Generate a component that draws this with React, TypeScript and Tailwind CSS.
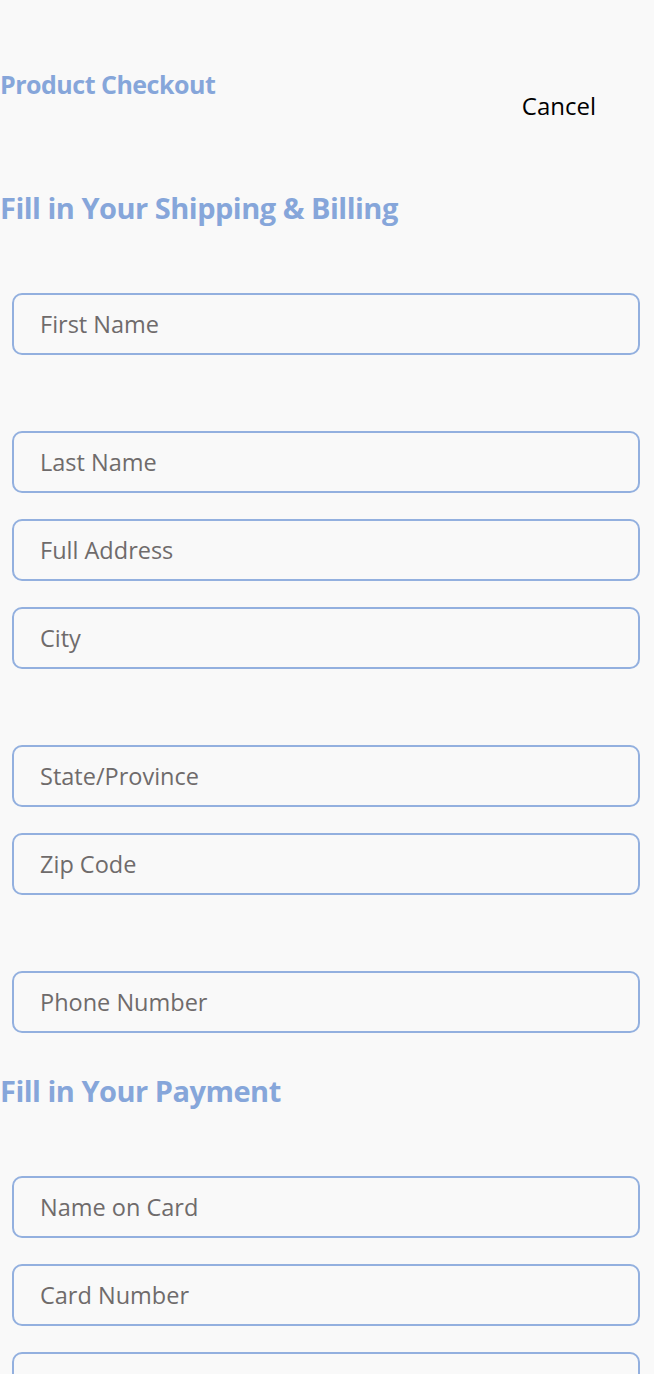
import React from "react";

const Field = ({ placeholder, className = "" }: { placeholder: string; className?: string }) => (
  <input
    type="text"
    placeholder={placeholder}
    className={`block h-[62px] w-[628px] rounded-[10px] border-2 border-[#93b0df] bg-transparent pl-[26px] text-[23.5px] text-[#555] outline-none placeholder:text-[#6f6b6b] ${className}`}
    style={{ fontFamily: '"Open Sans", sans-serif' }}
  />
);

export default function App() {
  return (
    <div className="min-h-[1374px] w-full overflow-hidden bg-[#f9f9f9]" style={{ fontFamily: '"Open Sans", sans-serif' }}>
      <header className="flex items-start justify-between pt-[66px] pr-[58px]">
        <h1 className="text-[25px] font-bold leading-[36px] tracking-[-0.5px] text-[#86a6da]">Product Checkout</h1>
        <button className="mt-[25px] text-[24px] leading-[30px] text-black">Cancel</button>
      </header>

      <h2 className="mt-[67px] text-[29px] font-bold leading-[40px] tracking-[-0.5px] text-[#86a6da]">
        Fill in Your Shipping &amp; Billing
      </h2>

      <form className="flex flex-col px-[12px]">
        <Field placeholder="First Name" className="mt-[65px]" />
        <Field placeholder="Last Name" className="mt-[76px]" />
        <Field placeholder="Full Address" className="mt-[26px]" />
        <Field placeholder="City" className="mt-[26px]" />
        <Field placeholder="State/Province" className="mt-[76px]" />
        <Field placeholder="Zip Code" className="mt-[26px]" />
        <Field placeholder="Phone Number" className="mt-[76px]" />
      </form>

      <h2 className="mt-[38px] text-[29px] font-bold leading-[40px] tracking-[-0.5px] text-[#86a6da]">
        Fill in Your Payment
      </h2>

      <div className="flex flex-col px-[12px]">
        <Field placeholder="Name on Card" className="mt-[65px]" />
        <Field placeholder="Card Number" className="mt-[26px]" />
        <Field placeholder="Expiry Month" className="mt-[26px]" />
        <Field placeholder="Expiry Year" className="mt-[26px]" />
      </div>
    </div>
  );
}
